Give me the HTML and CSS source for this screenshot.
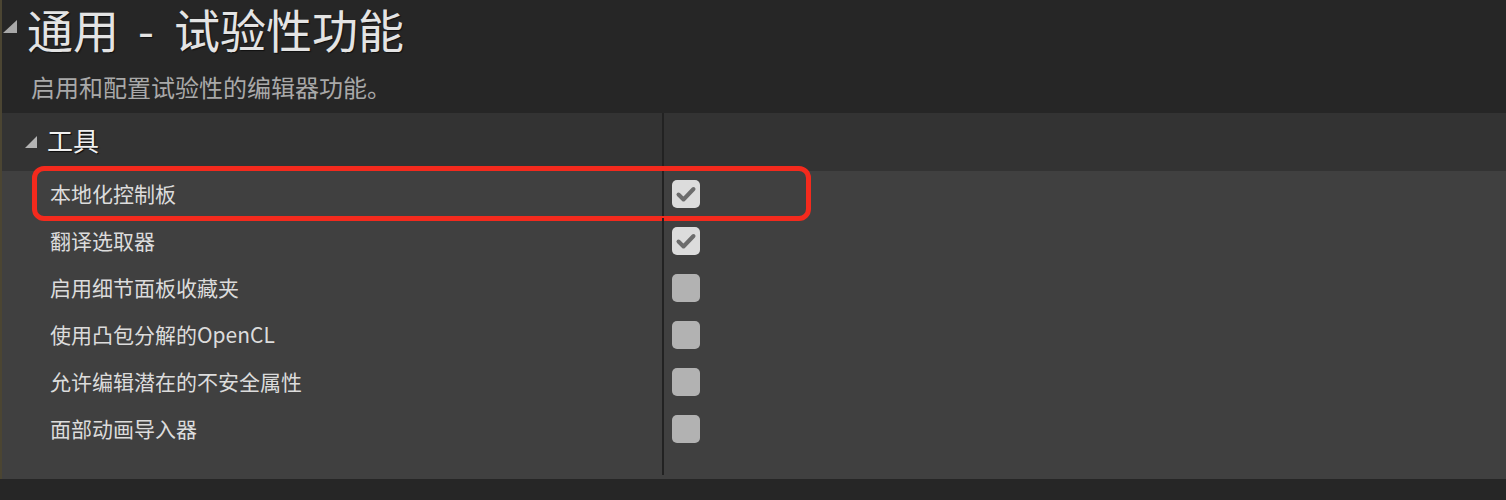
FILE: index.html
```html
<!DOCTYPE html>
<html lang="zh-CN">
<head>
<meta charset="utf-8">
<title>通用 - 试验性功能</title>
<link rel="stylesheet" href="styles.css">
</head>
<body>
<div class="main">
  <header class="header">
    <div class="title-row">
      <span class="tri tri-title"></span>
      <h1 class="title">通用<span class="dash">-</span>试验性功能</h1>
    </div>
    <p class="subtitle">启用和配置试验性的编辑器功能。</p>
  </header>

  <section class="section">
    <div class="cat-row">
      <div class="cell-name cat-name"><span class="tri tri-cat"></span><span class="cat-text">工具</span></div>
      <div class="cell-value"></div>
    </div>

    <div class="rows">
      <div class="row">
        <div class="cell-name">本地化控制板</div>
        <div class="cell-value"><span class="check on"><svg viewBox="0 0 28 28" width="28" height="28"><path d="M6.5 14.5 L11.5 19.5 L21.5 9" fill="none" stroke="#6c6c6c" stroke-width="4" stroke-linecap="round" stroke-linejoin="round"/></svg></span></div>
        <div class="highlight"></div>
      </div>
      <div class="row">
        <div class="cell-name">翻译选取器</div>
        <div class="cell-value"><span class="check on"><svg viewBox="0 0 28 28" width="28" height="28"><path d="M6.5 14.5 L11.5 19.5 L21.5 9" fill="none" stroke="#6c6c6c" stroke-width="4" stroke-linecap="round" stroke-linejoin="round"/></svg></span></div>
      </div>
      <div class="row">
        <div class="cell-name">启用细节面板收藏夹</div>
        <div class="cell-value"><span class="check"></span></div>
      </div>
      <div class="row">
        <div class="cell-name">使用凸包分解的OpenCL</div>
        <div class="cell-value"><span class="check"></span></div>
      </div>
      <div class="row">
        <div class="cell-name">允许编辑潜在的不安全属性</div>
        <div class="cell-value"><span class="check"></span></div>
      </div>
      <div class="row">
        <div class="cell-name">面部动画导入器</div>
        <div class="cell-value"><span class="check"></span></div>
      </div>
      <div class="row filler">
        <div class="cell-name"></div>
        <div class="cell-value"></div>
      </div>
    </div>
  </section>
</div>
<div class="footer"></div>
</body>
</html>
```

FILE: styles.css
```css
html, body {
  margin: 0;
  padding: 0;
}
body {
  width: 1506px;
  height: 500px;
  overflow: hidden;
  background: #262626;
  font-family: "Noto Sans CJK SC", "Noto Sans", "Liberation Sans", sans-serif;
}

.main {
  border-left: 2px solid #4b4532;
}

.header {
  height: 113px;
  box-sizing: border-box;
  padding-top: 0;
  background: #262626;
}

.title-row {
  display: flex;
  align-items: flex-start;
}

.tri {
  display: block;
  flex: none;
  clip-path: polygon(100% 0, 100% 100%, 0 100%);
}
.tri-title {
  width: 14px;
  height: 13px;
  margin-left: 1px;
  margin-top: 20px;
  background: #a8a8a8;
}

.title {
  margin: 0 0 0 10px;
  font-size: 46px;
  line-height: 56px;
  font-weight: 400;
  color: #e4e4e4;
  text-shadow: 1px 1px 1px #111;
  white-space: nowrap;
}

.dash {
  margin: 0 20px 0 19px;
}

.subtitle {
  margin: 19px 0 0 29px;
  font-size: 24px;
  line-height: 24px;
  color: #a9a9a9;
}

.section {
  background: #404040;
  padding-bottom: 4px;
}

.cat-row {
  display: grid;
  grid-template-columns: 662px 1fr;
  height: 58px;
  background: #333333;
}

.cell-name {
  box-sizing: border-box;
  border-right: 2px solid #222222;
  display: flex;
  align-items: center;
}

.cat-name {
  padding-left: 23px;
  padding-bottom: 4px;
}

.tri-cat {
  width: 12px;
  height: 12px;
  margin-top: 4px;
  background: #b4b4b4;
}

.cat-text {
  margin-left: 10px;
  font-size: 26px;
  line-height: 30px;
  color: #f0f0f0;
  text-shadow: 1px 1px 1px #0c0c0c;
}

.row {
  position: relative;
  display: grid;
  grid-template-columns: 662px 1fr;
  height: 47px;
}

.row .cell-name {
  padding-left: 48px;
  padding-bottom: 2px;
  font-size: 21px;
  line-height: 25px;
  color: #dcdcdc;
}

.cell-value {
  display: flex;
  align-items: center;
  padding-left: 8px;
}

.filler {
  height: 22px;
}

.check {
  display: block;
  width: 28px;
  height: 28px;
  border-radius: 5px;
  background: #b2b2b2;
  margin-top: -2px;
}
.check.on {
  background: #dcdcdc;
}
.check svg {
  display: block;
}

.highlight {
  position: absolute;
  left: 30px;
  top: -5px;
  width: 779px;
  height: 55px;
  box-sizing: border-box;
  border: 5px solid #f42a1d;
  border-radius: 12px;
  pointer-events: none;
}

.footer {
  height: 21px;
  background: #262626;
}
```
